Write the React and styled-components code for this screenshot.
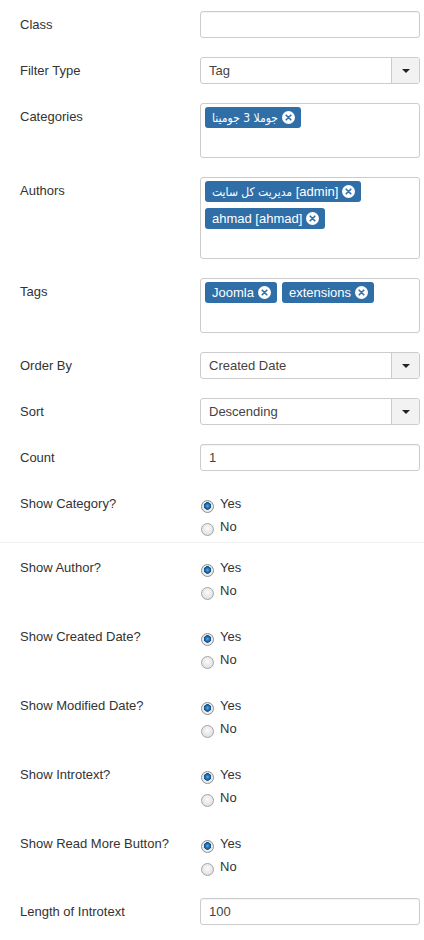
import React from "react";
import styled, { createGlobalStyle } from "styled-components";

const Global = createGlobalStyle`
  html, body { margin: 0; padding: 0; background: #fff; }
  body {
    font-family: "Liberation Sans", Arial, "DejaVu Sans", sans-serif;
    font-size: 13px;
    color: #333;
  }
`;

const Form = styled.div`
  padding-top: 11px;
  width: 424px;
`;

const Row = styled.div`
  display: flex;
  align-items: flex-start;
  padding-left: 20px;
  margin-bottom: ${(p) => (p.$mb != null ? p.$mb : 19)}px;
`;

const Label = styled.div`
  width: 180px;
  flex-shrink: 0;
  padding-top: 5px;
  line-height: 18px;
  color: #333;
`;

const Control = styled.div`
  width: 220px;
`;

const TextInput = styled.div`
  box-sizing: border-box;
  height: 27px;
  border: 1px solid #ccc;
  border-radius: 3px;
  box-shadow: inset 0 1px 1px rgba(0, 0, 0, 0.05);
  padding: 0 8px;
  line-height: 25px;
  color: #444;
  background: #fff;
`;

const Select = styled.div`
  box-sizing: border-box;
  height: 27px;
  border: 1px solid #ccc;
  border-radius: 3px;
  display: flex;
  overflow: hidden;
  background: #fff;
`;

const SelectValue = styled.div`
  flex: 1;
  padding-left: 8px;
  line-height: 25px;
  color: #444;
`;

const SelectButton = styled.div`
  width: 27px;
  border-left: 1px solid #ccc;
  background: #f2f2f2;
  display: flex;
  align-items: center;
  justify-content: center;
`;

const Caret = styled.span`
  width: 0;
  height: 0;
  border-top: 4px solid #222;
  border-left: 4px solid transparent;
  border-right: 4px solid transparent;
  margin-top: 1px;
`;

const MultiBox = styled.div`
  box-sizing: border-box;
  border: 1px solid #ccc;
  border-radius: 3px;
  padding: 3px 4px 2px;
  background: #fff;
`;

const Chips = styled.div`
  display: flex;
  flex-wrap: wrap;
  column-gap: 5px;
  row-gap: 6px;
  margin-bottom: 6px;
`;

const Chip = styled.span`
  display: inline-flex;
  align-items: center;
  box-sizing: border-box;
  height: 21px;
  line-height: 21px;
  overflow: hidden;
  padding: 0 6px 0 7px;
  gap: 4px;
  background: #2f6ea7;
  color: #fff;
  border-radius: 3px;
  font-size: 13px;
  white-space: nowrap;
`;

const Rtl = styled.span`
  font-family: "DejaVu Sans Condensed", "DejaVu Sans", sans-serif;
  font-size: 12px;
`;

const SearchLine = styled.div`
  height: 21px;
`;

const Divider = styled.div`
  height: 1px;
  background: #f0f0f0;
  margin-bottom: 11px;
`;

const RadioGroup = styled.div`
  padding-top: 2px;
`;

const Option = styled.label`
  display: flex;
  align-items: center;
  height: 23px;
  color: #333;
`;

const Radio = styled.span`
  box-sizing: border-box;
  width: 13px;
  height: 13px;
  margin: 5px 6px 0 1px;
  border-radius: 50%;
  border: 1px solid ${(p) => (p.$checked ? "#8a8f95" : "#a5a5a5")};
  background: ${(p) =>
    p.$checked
      ? "radial-gradient(circle at 50% 45%, #5fb2ee 0, #2a80c4 1.5px, #1a5892 3px, #164a7a 3.5px, #e8e8e8 4px, #f6f6f6 100%)"
      : "radial-gradient(circle at 50% 40%, #fafafa 0, #e6e6e6 60%, #d6d6d6 100%)"};
  flex-shrink: 0;
`;

const CloseIcon = () => (
  <svg width="13" height="13" viewBox="0 0 13 13" aria-hidden="true">
    <circle cx="6.5" cy="6.5" r="6.5" fill="#fff" />
    <path d="M4.2 4.2 L8.8 8.8 M8.8 4.2 L4.2 8.8" stroke="#2f6ea7" strokeWidth="1.6" strokeLinecap="round" />
  </svg>
);

const TagChip = ({ rtl, text }) => (
  <Chip>
    <span>
      {rtl && <Rtl>{rtl}</Rtl>}
      {text}
    </span>
    <CloseIcon />
  </Chip>
);

const RadioField = ({ label, mb }) => (
  <Row $mb={mb}>
    <Label>{label}</Label>
    <Control>
      <RadioGroup>
        <Option>
          <Radio $checked />
          Yes
        </Option>
        <Option>
          <Radio />
          No
        </Option>
      </RadioGroup>
    </Control>
  </Row>
);

const SelectField = ({ label, value }) => (
  <Row>
    <Label>{label}</Label>
    <Control>
      <Select>
        <SelectValue>{value}</SelectValue>
        <SelectButton>
          <Caret />
        </SelectButton>
      </Select>
    </Control>
  </Row>
);

const MultiField = ({ label, tags }) => (
  <Row>
    <Label>{label}</Label>
    <Control>
      <MultiBox>
        <Chips>
          {tags.map((t, i) => (
            <TagChip key={i} rtl={t.rtl} text={t.text} />
          ))}
        </Chips>
        <SearchLine />
      </MultiBox>
    </Control>
  </Row>
);

export default function App() {
  return (
    <>
      <Global />
      <Form>
        <Row>
          <Label>Class</Label>
          <Control>
            <TextInput />
          </Control>
        </Row>
        <SelectField label="Filter Type" value="Tag" />
        <MultiField label="Categories" tags={[{ rtl: "جوملا 3 جومینا" }]} />
        <MultiField
          label="Authors"
          tags={[{ rtl: "مدیریت کل سایت", text: " [admin]" }, { text: "ahmad [ahmad]" }]}
        />
        <MultiField label="Tags" tags={[{ text: "Joomla" }, { text: "extensions" }]} />
        <SelectField label="Order By" value="Created Date" />
        <SelectField label="Sort" value="Descending" />
        <Row>
          <Label>Count</Label>
          <Control>
            <TextInput>1</TextInput>
          </Control>
        </Row>
        <RadioField label="Show Category?" mb={4} />
        <Divider />
        <RadioField label="Show Author?" mb={21} />
        <RadioField label="Show Created Date?" mb={21} />
        <RadioField label="Show Modified Date?" mb={21} />
        <RadioField label="Show Introtext?" mb={21} />
        <RadioField label="Show Read More Button?" mb={20} />
        <Row>
          <Label>Length of Introtext</Label>
          <Control>
            <TextInput>100</TextInput>
          </Control>
        </Row>
      </Form>
    </>
  );
}
